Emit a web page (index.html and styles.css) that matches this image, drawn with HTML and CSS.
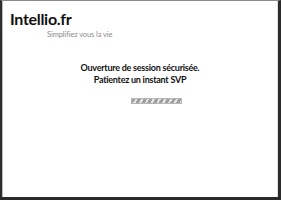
FILE: index.html
```html
<!DOCTYPE html>
<html>
<head>
<meta charset="utf-8">
<link rel="stylesheet" href="styles.css">
</head>
<body>
<div class="frame">
  <header class="brand">
    <div class="logo">Intellio.fr</div>
    <div class="tagline">Simplifiez vous la vie</div>
  </header>
  <main class="status">
    <p class="msg">Ouverture de session sécurisée.<br>Patientez un instant SVP</p>
    <div class="progress"></div>
  </main>
</div>
</body>
</html>
```
FILE: styles.css
```css
html, body {
  margin: 0;
  padding: 0;
  background: #fff;
}
.frame {
  box-sizing: border-box;
  width: 281px;
  height: 200px;
  border-top: 1px solid #8a8a8a;
  border-left: 2px solid #2e2e2e;
  border-right: 3px solid #2a2a2a;
  border-bottom: 3px solid #2a2a2a;
  box-shadow: inset 1px 0 0 #bdbdbd, inset -1px 0 0 #e0e0e0;
  font-family: Lato, "Open Sans", "Liberation Sans", sans-serif;
  display: flex;
  flex-direction: column;
}
.brand {
  padding: 8px 0 0 8px;
}
.logo {
  font-size: 16px;
  font-weight: 700;
  color: #111;
  line-height: 20px;
  letter-spacing: -0.3px;
}
.tagline {
  font-size: 7.5px;
  color: #8c8c8c;
  line-height: 10px;
  padding-left: 37px;
  margin-top: 1px;
  letter-spacing: -0.1px;
}
.status {
  display: flex;
  flex-direction: column;
  align-items: center;
  padding-top: 22px;
}
.msg {
  margin: 0;
  font-size: 9px;
  font-weight: 700;
  color: #111;
  line-height: 12px;
  text-align: center;
  letter-spacing: -0.25px;
}
.progress {
  margin-top: 12px;
  margin-left: 32px;
  width: 49px;
  height: 4px;
  border: 1px solid #b5b5b5;
  background: repeating-linear-gradient(120deg, #a0a0a0 0 3px, #e6e6e6 3px 5px);
}
```
